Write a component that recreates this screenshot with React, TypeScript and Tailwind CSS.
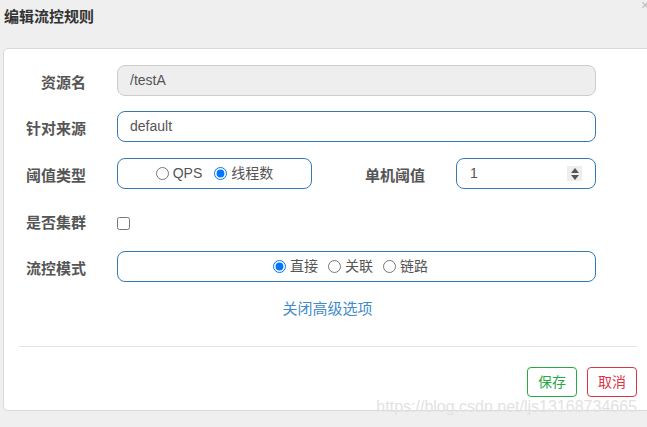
import React from "react";

const font = { fontFamily: '"Liberation Sans", "Noto Sans CJK SC", Arial, sans-serif' };

function Radio({ checked, label }: { checked?: boolean; label: string }) {
  return (
    <label className="flex items-center gap-[4px] text-[14px] text-[#555]">
      <input type="radio" checked={!!checked} readOnly className="m-0 h-[13px] w-[13px]" />
      <span>{label}</span>
    </label>
  );
}

function Label({ children, w = "w-[67px]" }: { children: React.ReactNode; w?: string }) {
  return (
    <div className={`${w} shrink-0 pt-[5px] text-right text-[15px] font-bold text-[#555]`}>{children}</div>
  );
}

export default function App() {
  return (
    <div className="relative h-[427px] w-[647px] overflow-hidden bg-[#efefef]" style={font}>
      <span className="absolute left-[641px] top-[-5px] text-[14px] text-[#bbb]">×</span>
      <div className="h-[48px] pl-[4px] pt-[6px] text-[15px] font-bold leading-[22px] text-[#333]">
        编辑流控规则
      </div>
      <div className="ml-[3px] h-[363px] w-[650px] rounded-tl-[5px] rounded-bl-[5px] border border-[#d9d9d9] bg-white pl-[15px] pr-[15px] pt-[16px]">
        <div className="w-[577px]">
          {/* 资源名 */}
          <div className="flex h-[31px] items-center">
            <Label>资源名</Label>
            <div className="ml-[31px] flex h-[31px] flex-1 items-center rounded-lg border border-[#ccc] bg-[#eee] pl-[12px] text-[14px] text-[#555]">
              /testA
            </div>
          </div>
          {/* 针对来源 */}
          <div className="mt-[15px] flex h-[31px] items-center">
            <Label>针对来源</Label>
            <div className="ml-[31px] flex h-[31px] flex-1 items-center rounded-lg border border-[#337ab7] bg-white pl-[12px] text-[14px] text-[#555]">
              default
            </div>
          </div>
          {/* 阈值类型 */}
          <div className="mt-[16px] flex h-[31px] items-center">
            <Label>阈值类型</Label>
            <div className="ml-[31px] flex h-[31px] w-[195px] items-center justify-center gap-[12px] rounded-lg border border-[#337ab7]">
              <Radio label="QPS" />
              <Radio checked label="线程数" />
            </div>
            <Label w="w-[113px]">单机阈值</Label>
            <div className="ml-[31px] flex h-[31px] flex-1 items-center justify-between rounded-lg border border-[#337ab7] pl-[13px] pr-[13px] text-[14px] text-[#555]">
              <span>1</span>
              <div className="flex h-[15px] w-[15px] flex-col items-center justify-center gap-[2px] bg-[#eee]">
                <svg width="8" height="5" viewBox="0 0 8 5"><path d="M4 0 L8 5 L0 5 Z" fill="#555" /></svg>
                <svg width="8" height="5" viewBox="0 0 8 5"><path d="M0 0 L8 0 L4 5 Z" fill="#555" /></svg>
              </div>
            </div>
          </div>
          {/* 是否集群 */}
          <div className="mt-[16px] flex h-[31px] items-center">
            <Label>是否集群</Label>
            <input type="checkbox" readOnly className="m-0 ml-[31px] mt-[6px] h-[13px] w-[13px]" />
          </div>
          {/* 流控模式 */}
          <div className="mt-[15px] flex h-[31px] items-center">
            <Label>流控模式</Label>
            <div className="ml-[31px] flex h-[31px] flex-1 items-center justify-center gap-[10px] rounded-lg border border-[#337ab7] pr-[12px]">
              <Radio checked label="直接" />
              <Radio label="关联" />
              <Radio label="链路" />
            </div>
          </div>
        </div>
        <div className="mt-[17px] flex h-[21px] w-[577px] items-center justify-center pl-[40px] text-[15px] text-[#428bca]">
          关闭高级选项
        </div>
        <div className="mt-[26px] h-px w-[618px] bg-[#e5e5e5]" />
        <div className="mt-[20px] flex w-[618px] justify-end gap-[10px]">
          <div className="flex h-[30px] w-[50px] items-center justify-center rounded-[4px] border border-[#28a745] text-[14px] text-[#28a745]">
            保存
          </div>
          <div className="flex h-[30px] w-[50px] items-center justify-center rounded-[4px] border border-[#dc3545] text-[14px] text-[#dc3545]">
            取消
          </div>
        </div>
      </div>
      <span className="absolute right-[10px] top-[398px] text-[16px] leading-[18px] text-[#e2e2e2]">
        https://blog.csdn.net/ljs13168734665
      </span>
    </div>
  );
}
